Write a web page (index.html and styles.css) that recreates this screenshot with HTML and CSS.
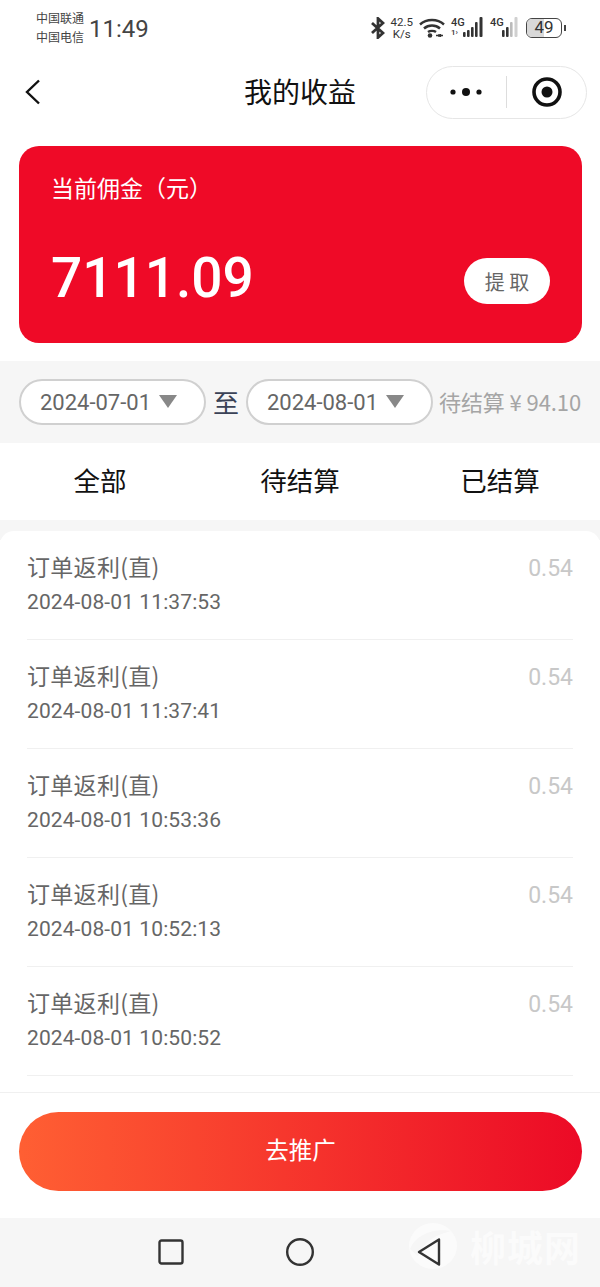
FILE: index.html
```html
<!doctype html>
<html lang="zh-CN">
<head>
    <meta charset="UTF-8">
    <meta name="viewport" content="width=device-width, initial-scale=1.0">
    <title>我的收益</title>
    <link rel="stylesheet" href="styles.css">
</head>
<body>
    <div class="status-bar">
        <div class="carriers">
            <span>中国联通</span>
            <span>中国电信</span>
        </div>
        <div class="clock">11:49</div>
        <div class="status-icons">
            <svg class="icon-bt" width="14" height="22" viewBox="0 0 14 22" fill="none" stroke="#333" stroke-width="2.8">
                <path d="M1 6l11 10-5 4.5V1.5L12 6 1 16"/>
            </svg>
            <div class="speed">
                <span>42.5</span>
                <span>K/s</span>
            </div>
            <svg class="icon-wifi" width="26" height="20" viewBox="0 0 26 20" fill="none" stroke="#333" stroke-width="2.4">
                <path d="M1 6.5c6.500-6 17.500-6 24 0"/>
                <path d="M5 10.500c4.500-4 11.500-4 16 0"/>
                <path d="M9 14c2-1.500 6-1.500 8 0"/>
                <circle cx="11" cy="17.500" r="2.300" fill="#333" stroke="none"/>
                <path d="M17 17.500h7M20 16v3M21.500 16v3" stroke-width="1.300"/>
            </svg>
            <div class="sim">
                <div class="sim-label">
                    <span>4G</span>
                    <span class="sim-num">1›</span>
                </div>
                <svg width="20" height="22" viewBox="0 0 20 22" fill="#333">
                    <rect x="0" y="16" width="2.600" height="5" rx="1"/>
                    <rect x="4" y="14" width="2.600" height="7" rx="1"/>
                    <rect x="8" y="11" width="2.600" height="10" rx="1"/>
                    <rect x="12" y="6" width="2.600" height="15" rx="1"/>
                    <rect x="16.500" y="1" width="3" height="20" rx="1"/>
                </svg>
            </div>
            <div class="sim sim-second">
                <div class="sim-label">
                    <span>4G</span>
                    <span class="sim-num">&nbsp;</span>
                </div>
                <svg width="16" height="22" viewBox="0 0 16 22" fill="#333">
                    <rect x="0" y="14" width="2.600" height="7" rx="1"/>
                    <rect x="4" y="11" width="2.600" height="10" rx="1"/>
                    <rect x="8" y="6" width="2.600" height="15" rx="1" fill="#bbb"/>
                    <rect x="12.500" y="1" width="3" height="20" rx="1" fill="#d0d0d0"/>
                </svg>
            </div>
            <div class="battery">
                <div class="battery-body">
                    <div class="battery-level" style="width: 49%"></div>
                    <span>49</span>
                </div>
                <div class="battery-tip"></div>
            </div>
        </div>
    </div>

    <div class="nav-bar">
        <svg class="nav-back" width="16" height="26" viewBox="0 0 16 26" fill="none" stroke="#111" stroke-width="2.4">
            <path d="M14 1.500L2 13l12 11.500"/>
        </svg>
        <div class="nav-title">我的收益</div>
        <div class="capsule">
            <svg width="34" height="10" viewBox="0 0 34 10" fill="#111">
                <circle cx="4" cy="5" r="2.600"/>
                <circle cx="17" cy="5" r="4"/>
                <circle cx="30" cy="5" r="2.600"/>
            </svg>
            <div class="capsule-line"></div>
            <svg width="32" height="32" viewBox="0 0 32 32">
                <circle cx="16" cy="16" r="13" fill="none" stroke="#111" stroke-width="3.600"/>
                <circle cx="16" cy="16" r="5.500" fill="#111"/>
            </svg>
        </div>
    </div>

    <div class="card">
        <div class="card-label">当前佣金（元）</div>
        <div class="card-row">
            <div class="card-amount">7111.09</div>
            <button class="withdraw-btn">提 取</button>
        </div>
    </div>

    <div class="filter-bar">
        <div class="date-pill">
            <span>2024-07-01</span>
            <i class="arrow"></i>
        </div>
        <span class="date-to">至</span>
        <div class="date-pill">
            <span>2024-08-01</span>
            <i class="arrow"></i>
        </div>
        <span class="pending">待结算 ¥ 94.10</span>
    </div>

    <div class="tabs">
        <div class="tab">全部</div>
        <div class="tab">待结算</div>
        <div class="tab">已结算</div>
    </div>

    <div class="list-wrap">
        <div class="list">
            <div class="row">
                <div>
                    <div class="row-title">订单返利(直)</div>
                    <div class="row-time">2024-08-01 11:37:53</div>
                </div>
                <div class="row-money">0.54</div>
            </div>
            <div class="row">
                <div>
                    <div class="row-title">订单返利(直)</div>
                    <div class="row-time">2024-08-01 11:37:41</div>
                </div>
                <div class="row-money">0.54</div>
            </div>
            <div class="row">
                <div>
                    <div class="row-title">订单返利(直)</div>
                    <div class="row-time">2024-08-01 10:53:36</div>
                </div>
                <div class="row-money">0.54</div>
            </div>
            <div class="row">
                <div>
                    <div class="row-title">订单返利(直)</div>
                    <div class="row-time">2024-08-01 10:52:13</div>
                </div>
                <div class="row-money">0.54</div>
            </div>
            <div class="row">
                <div>
                    <div class="row-title">订单返利(直)</div>
                    <div class="row-time">2024-08-01 10:50:52</div>
                </div>
                <div class="row-money">0.54</div>
            </div>
        </div>
    </div>

    <div class="bottom-bar">
        <button class="promote-btn">去推广</button>
    </div>

    <div class="sys-nav">
        <div class="watermark">
            <svg width="50" height="48" viewBox="0 0 50 48">
                <ellipse cx="25" cy="24" rx="24" ry="23" fill="#fff"/>
                <path d="M2 27C8 13 24 6 44 9 30 12 16 18 10 34" fill="#f6f6f6"/>
            </svg>
            <span>柳城网</span>
        </div>
        <svg class="sys-icon" width="26" height="26" viewBox="0 0 26 26" fill="none" stroke="#333" stroke-width="2.400">
            <rect x="1.500" y="1.500" width="23" height="23" rx="2"/>
        </svg>
        <svg class="sys-icon" width="30" height="30" viewBox="0 0 30 30" fill="none" stroke="#333" stroke-width="2.400">
            <circle cx="15" cy="15" r="12.800"/>
        </svg>
        <svg class="sys-icon" width="26" height="30" viewBox="0 0 26 30" fill="none" stroke="#333" stroke-width="2.400" stroke-linejoin="round">
            <path d="M23 2.500L3 15l20 12.500z"/>
        </svg>
    </div>
</body>
</html>
```

FILE: styles.css
```css
* {
    box-sizing: border-box;
}

body {
    margin: 0;
    width: 600px;
    height: 1287px;
    overflow: hidden;
    background-color: white;
    color: #111;
    font-family: "Noto Sans CJK SC", "Noto Sans", sans-serif;
}

button {
    border: none;
    font-family: inherit;
}

/* status bar */
.status-bar {
    display: flex;
    align-items: center;
    height: 54px;
    padding: 0 34px 0 36px;
}

.carriers {
    display: flex;
    flex-direction: column;
    gap: 2px;
    font-size: 12px;
    line-height: 17px;
    color: #444;
}

.clock {
    margin: 4px 0 0 5px;
    font-family: Roboto, sans-serif;
    font-size: 24px;
    color: #444;
}

.status-icons {
    display: flex;
    align-items: center;
    gap: 6px;
    margin: 2px 0 0 auto;
    color: #333;
}

.speed {
    display: flex;
    flex-direction: column;
    align-items: center;
    font-family: Roboto, sans-serif;
    font-size: 11.5px;
    line-height: 12px;
}

.sim {
    display: flex;
    align-items: flex-end;
    margin-top: -2px;
}

.sim-label {
    display: flex;
    flex-direction: column;
    width: 12px;
    font-family: Roboto, sans-serif;
    font-size: 11px;
    font-weight: 500;
    line-height: 10px;
    white-space: nowrap;
}

.sim-num {
    font-size: 8px;
}

.sim-second {
    margin-left: 1px;
}

.battery {
    display: flex;
    align-items: center;
    gap: 2px;
    margin-left: 2px;
}

.battery-body {
    position: relative;
    width: 36px;
    height: 20px;
    border: 1.5px solid #444;
    border-radius: 6px;
    overflow: hidden;
    text-align: center;
    font-family: Roboto, sans-serif;
    font-size: 17px;
    line-height: 17px;
    color: #333;
}

.battery-level {
    position: absolute;
    left: 0;
    top: 0;
    bottom: 0;
    background-color: #d8d8d8;
}

.battery-body span {
    position: relative;
}

.battery-tip {
    width: 2px;
    height: 6px;
    background-color: #444;
}

/* nav */
.nav-bar {
    position: relative;
    display: flex;
    align-items: center;
    justify-content: space-between;
    height: 76px;
    padding: 0 13px 0 25px;
}

.nav-title {
    position: absolute;
    left: 0;
    right: 0;
    top: 17px;
    text-align: center;
    font-size: 28px;
    line-height: 40px;
    pointer-events: none;
}

.capsule {
    display: flex;
    align-items: center;
    justify-content: space-between;
    width: 161px;
    height: 53px;
    padding: 0 23px 0 22px;
    border: 1px solid #e6e6e6;
    border-radius: 27px;
}

.capsule-line {
    width: 1px;
    height: 32px;
    margin-right: 2px;
    background-color: #ddd;
}

/* card */
.card {
    margin: 16px 18px 18px 19px;
    height: 197px;
    padding: 26px 32px 0;
    background-color: #ef0a27;
    border-radius: 20px;
    color: white;
}

.card-label {
    font-size: 23px;
    line-height: 30px;
}

.card-row {
    display: flex;
    align-items: center;
    justify-content: space-between;
    margin-top: 41px;
}

.card-amount {
    font-family: Roboto, sans-serif;
    font-size: 55px;
    font-weight: 500;
    line-height: 70px;
}

.withdraw-btn {
    width: 86px;
    height: 46px;
    margin-top: 6px;
    background-color: white;
    border-radius: 23px;
    color: #666;
    font-size: 20px;
}

/* filter */
.filter-bar {
    display: flex;
    align-items: center;
    height: 82px;
    padding: 0 19px 0 19px;
    background-color: #f6f6f6;
}

.date-pill {
    display: flex;
    align-items: center;
    justify-content: center;
    gap: 8px;
    width: 187px;
    height: 46px;
    padding-right: 8px;
    background-color: white;
    border: 2px solid #d0d0d0;
    border-radius: 23px;
    font-family: Roboto, sans-serif;
    font-size: 22px;
    color: #666;
}

.arrow {
    width: 0;
    height: 0;
    margin-top: -2px;
    border-left: 9.5px solid transparent;
    border-right: 9.5px solid transparent;
    border-top: 13px solid #888;
}

.date-to {
    width: 40px;
    margin-top: -2px;
    text-align: center;
    font-size: 26px;
    color: #3a4256;
}

.pending {
    margin: -3px 0 0 auto;
    font-size: 22px;
    letter-spacing: -0.1px;
    color: #a5a5a5;
    white-space: nowrap;
}

/* tabs */
.tabs {
    display: flex;
    height: 77px;
    padding-bottom: 4px;
    align-items: center;
}

.tab {
    flex: 1;
    text-align: center;
    font-size: 26.5px;
}

/* list */
.list-wrap {
    height: 573px;
    padding-top: 11px;
    background: linear-gradient(#f6f6f6 20px, white 20px);
    border-bottom: 1px solid #f0f0f0;
}

.list {
    height: 100%;
    padding: 0 27px;
    background-color: white;
    border-radius: 14px 14px 0 0;
}

.row {
    display: flex;
    justify-content: space-between;
    height: 109px;
    padding-top: 18px;
    border-bottom: 1px solid #f0f0f0;
}

.row-title {
    font-size: 23px;
    letter-spacing: 0.3px;
    line-height: 34px;
    color: #666;
}

.row-time {
    margin-top: 3px;
    font-family: Roboto, sans-serif;
    font-size: 21px;
    letter-spacing: 0.1px;
    line-height: 32px;
    color: #666;
}

.row-money {
    margin-top: 3px;
    font-family: Roboto, sans-serif;
    font-size: 23px;
    line-height: 34px;
    color: #c8c8c8;
}

/* bottom */
.bottom-bar {
    height: 125px;
    padding: 19px 18px 0 19px;
}

.promote-btn {
    display: block;
    width: 100%;
    height: 79px;
    padding-bottom: 6px;
    background: linear-gradient(90deg, #ff5f33, #ec0a26);
    border-radius: 40px;
    color: white;
    font-size: 23.5px;
}

.sys-nav {
    position: relative;
    display: flex;
    align-items: center;
    justify-content: center;
    gap: 101px;
    height: 69px;
    padding-bottom: 1px;
    background-color: #f6f6f6;
}

.sys-icon {
    position: relative;
}

.watermark {
    position: absolute;
    left: 408px;
    top: 4px;
    display: flex;
    align-items: center;
    gap: 12px;
    color: white;
    font-size: 36px;
    font-weight: 700;
    line-height: 48px;
    letter-spacing: 1px;
    opacity: 0.6;
}
```
